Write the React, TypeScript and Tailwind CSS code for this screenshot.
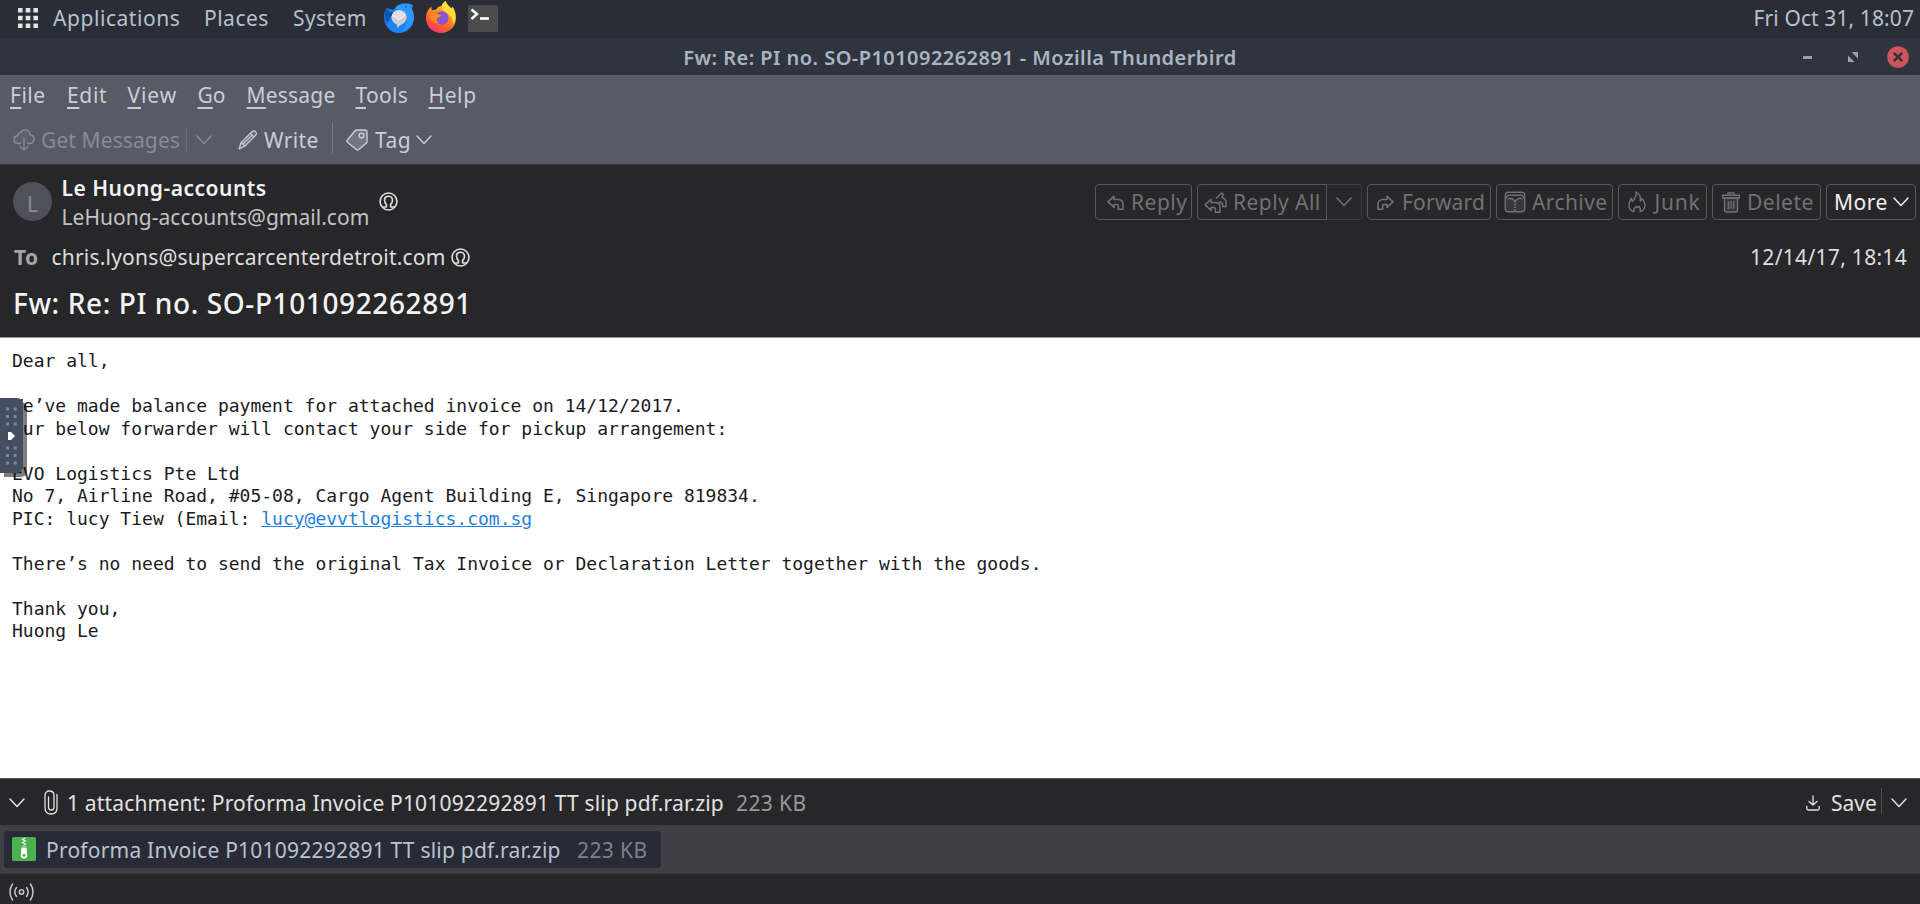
import React from "react";

type IconProps = { className?: string };

function Chevron({ className = "" }: IconProps) {
  return (
    <svg viewBox="0 0 16 10" className={`h-[10px] w-4 shrink-0 ${className}`} fill="none" stroke="currentColor" strokeWidth="1.5" strokeLinecap="round" strokeLinejoin="round">
      <path d="M1 1l7 7.5L15 1" />
    </svg>
  );
}

function GridIcon() {
  return (
    <svg viewBox="0 0 20 20" className="size-5 shrink-0 fill-[#e3e4e6]">
      {[0, 7.7, 15.4].map((y) => [0, 7.7, 15.4].map((x) => <rect key={`${x}-${y}`} x={x} y={y} width="4.6" height="4.6" rx="0.6" />))}
    </svg>
  );
}

function ThunderbirdIcon() {
  return (
    <svg viewBox="0 0 30 30" className="size-[30px] shrink-0">
      <path d="M2.500 5C.5 8 0 12 .3 15.500 .8 24 7 30 15 30c8.500 0 15-6.700 15-15 0-3.500-1-6.500-2.200-8.500L29 2.500C26-.5 18-.8 13.500 2.500L9 7z" fill="#1b83f5" />
      <path d="M2.500 5C.5 9 .3 16 3.500 20L10 9 7 9C5 8.500 3.200 7 2.500 5z" fill="#0b55ad" />
      <path d="M11 5.500C13 1 22-.3 28.500 2l-2 2C29.500 7.500 30.500 13 29 18c-1.500 5-6 9-11 10.500 4-3.500 5.500-9 4-13.500C20.500 10 16 6.500 11 5.500z" fill="#2f97ff" />
      <circle cx="15" cy="14.300" r="7.400" fill="#dededf" />
      <path d="M7.600 13l7.400 4.500 7.400-4.800c.5 3.300-.6 5.800-2.900 7.500L15.500 22.500 14 25c-1-1-1-2.300-1-3.500-3.500-1.500-5.700-4.700-5.400-8.500z" fill="#cdced0" />
      <path d="M8 11.500l7 5 7-5" fill="none" stroke="#f4f4f5" strokeWidth="1" />
      <circle cx="22" cy="3.800" r=".7" fill="#0a3f8a" />
    </svg>
  );
}

function FirefoxIcon() {
  return (
    <svg viewBox="0 0 30 32" className="h-8 w-[30px] shrink-0">
      <defs>
        <linearGradient id="fx" x1="0.800" y1="0" x2="0.300" y2="1">
          <stop offset="0" stopColor="#ffe03c" />
          <stop offset="0.450" stopColor="#ff8f1f" />
          <stop offset="0.750" stopColor="#ff5a2c" />
          <stop offset="1" stopColor="#f0308a" />
        </linearGradient>
      </defs>
      <path d="M5.500 5.500c-.2 1.500 0 2.800.6 3.700L10 8.500C11.500 6 14 5 15.500 5 16 3 17.500 1 19.500 0c.8 3 3.500 5 5.500 7.300l1.500-1.200C29 9.500 30 13 30 17c0 8.500-6.500 15-15 15S0 25.500 0 17C0 12.500 2 8 5.500 5.500z" fill="url(#fx)" />
      <path d="M15.500 6C17 3 18 1 19.500 0c.8 3 3.500 5 5.500 7.300l1.500-1.200C29.500 10 31 18 27 24c.5-6-2-9-5-11s-5-3.500-6.500-7z" fill="#ffdc3a" />
      <circle cx="15.800" cy="17" r="6.800" fill="#8a55cf" />
      <path d="M4 13c3-1.500 6-1 8.500.5l2.700.5c-.5 2-2.500 2.500-4 3-1 1-.7 3.500 1.300 4.700C7.500 23 4 19 4 13z" fill="#ff8a20" />
    </svg>
  );
}

function TerminalIcon() {
  return (
    <svg viewBox="0 0 30 28" className="h-7 w-[30px] shrink-0">
      <rect x="0" y="0" width="30" height="27" rx="1.500" fill="#4b4b4b" />
      <path d="M3.500 4.500l5.500 4.500-5.500 5" fill="none" stroke="#fff" strokeWidth="2.400" />
      <path d="M12 13.500h9" stroke="#fff" strokeWidth="2.600" />
    </svg>
  );
}

function CloudIcon() {
  return (
    <svg viewBox="0 0 22 22" className="size-[22px] shrink-0" fill="none" stroke="currentColor" strokeWidth="1.400" strokeLinecap="round" strokeLinejoin="round">
      <path d="M7.500 14.500H5C2.500 14.500 1 12.700 1 10.700S2.500 7 4.500 6.800C4.300 5 5.500 3.500 7.500 3.700 8.300 2 10 1 12 1c3 0 5 2 5 4.800 2.300.1 4 1.900 4 4.300s-1.700 4.400-4 4.400h-2.500" fill="currentColor" fillOpacity="0.150" />
      <path d="M11 9v12M7 17.500l4 3.500 4-3.500" />
    </svg>
  );
}

function PencilIcon() {
  return (
    <svg viewBox="0 0 20 20" className="size-5 shrink-0" fill="none" stroke="currentColor" strokeWidth="1.300" strokeLinejoin="round">
      <path d="M1.200 18.800L3 12.700 14 1.800c1.200-1.100 2.600-1 3.500-.2.9.9 1.200 2.400.2 3.500L7 16z" fill="currentColor" fillOpacity="0.150" />
      <path d="M3 12.700L7 16M12.500 3.500l3.500 3.600M4.800 14.300l8.700-8.700" />
    </svg>
  );
}

function TagIcon() {
  return (
    <svg viewBox="0 0 22 22" className="size-[22px] shrink-0" fill="none" stroke="currentColor" strokeWidth="1.400" strokeLinejoin="round">
      <path d="M1.300 11.300L9 1.800C9.500 1.200 10 1 10.700 1H19c1.200 0 2 .8 2 2v9.500c0 .7-.2 1.200-.8 1.700l-7.500 6.300c-.8.700-1.700.7-2.400 0l-8.800-7.200c-.7-.6-.8-1.300-.2-2z" fill="currentColor" fillOpacity="0.250" />
      <circle cx="15.500" cy="6.500" r="2.400" />
    </svg>
  );
}

function PersonIcon() {
  return (
    <svg viewBox="0 0 20 20" className="size-[19px] shrink-0" fill="none" stroke="currentColor" strokeWidth="1.700" strokeLinejoin="round">
      <circle cx="10" cy="10" r="8.900" />
      <path d="M4 15.800h3.800v-2.600C6.700 12.200 5.800 10.300 5.800 8.500 5.800 6 7.500 4.500 10 4.500s4.200 1.500 4.200 4c0 1.800-.9 3.700-2 4.700v2.600H16" />
    </svg>
  );
}

const REPLY = "M7 1.200L1 6.800l6 5.600V9.500h3.200c.8 0 1.200.4 1.200 1.200v3.500h4.600V9.700c0-3.200-2-5.200-5-5.200H7z";

function ReplyIcon({ className = "" }: IconProps) {
  return (
    <svg viewBox="0 0 17 15" className={`h-[15px] w-[17px] shrink-0 ${className}`} fill="none" stroke="currentColor" strokeWidth="1.600" strokeLinejoin="round">
      <path d={REPLY} />
    </svg>
  );
}

function ReplyAllIcon() {
  return (
    <svg viewBox="0 0 23 21" className="h-[21px] w-[23px] shrink-0" fill="none" stroke="currentColor" strokeWidth="1.500" strokeLinejoin="round">
      <path d={REPLY} transform="translate(0 6)" />
      <path d="M12 6.500L17.500 1l2 1.300-1.500 3.200c3 1 4.300 3.200 4.100 6.200l-.3 3-3-.2c.3-2.500-.5-4-2.800-4.500L15 11" />
    </svg>
  );
}

function ArchiveIcon() {
  return (
    <svg viewBox="0 0 22 22" className="size-[22px] shrink-0" fill="none" stroke="currentColor" strokeWidth="1.400" strokeLinejoin="round">
      <path d="M1.500 6.500V18c0 1.700 1 2.700 2.700 2.700h13.600c1.700 0 2.700-1 2.700-2.700V6.500l-6 .3L11 9 7.500 6.800z" fill="currentColor" fillOpacity="0.250" stroke="none" />
      <rect x="1.300" y="1.200" width="19.400" height="19.600" rx="3" />
      <path d="M1.500 7.500L4 4.200h14l2.500 3.300M4 7.500h3.500c2.500.3 1.500 2.500 3.500 2.500s1-2.200 3.500-2.500H18" />
      <path d="M11 10v10.500" strokeDasharray="1.500 1.200" strokeWidth="2" />
    </svg>
  );
}

function JunkIcon() {
  return (
    <svg viewBox="0 0 18 22" className="h-[22px] w-[18px] shrink-0" fill="none" stroke="currentColor" strokeWidth="1.400" strokeLinejoin="round">
      <path d="M6 20.800C2.800 19.800 1 17.300 1 14c0-3 1.300-5 2.200-6.700.8 1 1 2.200 1 3.200C7 8 8.500 4.500 8 1c3.500 2 4.800 5.500 4.300 9 1-.5 1.500-1.300 1.700-2.500 1.700 1.800 3 4 3 6.500 0 3.300-1.800 5.800-5 6.800.8-2.300.3-4-1-5.500-.3.8-.8 1.200-1.500 1.200-.6 0-1-.3-1.200-1-1.800 1.300-3 3-2.300 5.300z" />
    </svg>
  );
}

function TrashIcon() {
  return (
    <svg viewBox="0 0 18 21" className="h-[21px] w-[18px] shrink-0" fill="none" stroke="currentColor" strokeWidth="1.400" strokeLinejoin="round">
      <path d="M2.500 6h13v12c0 1.300-.7 2-2 2h-9c-1.300 0-2-.7-2-2z" fill="currentColor" fillOpacity="0.200" />
      <path d="M.7 3.300h16.600V6H.7zM6 3V1h6v2M6.300 9v8M9 9v8M11.700 9v8" />
    </svg>
  );
}

function ClipIcon() {
  return (
    <svg viewBox="0 0 14 25" className="h-[25px] w-[14px] shrink-0" fill="none" stroke="currentColor" strokeWidth="1.300" strokeLinecap="round">
      <path d="M13 4.500v13.500c0 4-2.300 6-6 6s-6-2-6-6V5.500C1 2.500 2.700 1 5.500 1S10 2.500 10 5.500V17c0 2-1 3-2.700 3S4.500 19 4.500 17V7" />
    </svg>
  );
}

function ZipIcon() {
  return (
    <svg viewBox="0 0 24 24" className="size-6 shrink-0">
      <rect width="24" height="24" rx="1.500" fill="#4caf50" />
      <path d="M13.500 1l-3 1.500 3 1.500-3 1.500 3 1.500-2 1.500" stroke="#e8f5e9" strokeWidth="1.200" fill="none" />
      <path d="M9.500 10.500h5l.7 8.200c.1 1.700-1 2.800-3.200 2.800s-3.300-1.100-3.200-2.800z" fill="#fff" />
      <path d="M9.500 8.800h5v1.700h-5z" fill="#aab5ab" />
      <circle cx="12" cy="18.300" r="1.400" fill="#4caf50" />
    </svg>
  );
}

function SaveIcon() {
  return (
    <svg viewBox="0 0 14 16" className="h-4 w-[14px] shrink-0" fill="none" stroke="currentColor" strokeWidth="1.300" strokeLinecap="round" strokeLinejoin="round">
      <path d="M7 1v9M3 6.500L7 10l4-3.500M.8 11.500v2c0 1 .5 1.500 1.500 1.500h9.400c1 0 1.500-.5 1.500-1.500v-2" />
    </svg>
  );
}

function SignalIcon() {
  return (
    <svg viewBox="0 0 25 18" className="h-[18px] w-[25px] shrink-0" fill="none" stroke="currentColor" strokeWidth="1.500" strokeLinecap="round">
      <circle cx="12.500" cy="9" r="2.200" />
      <path d="M7.500 4.500c-2 2.700-2 6.300 0 9M17.500 4.500c2 2.700 2 6.300 0 9M3.500 1C.2 5.800.2 12.200 3.500 17M21.500 1c3.300 4.800 3.300 11.200 0 16" />
    </svg>
  );
}

function MenuItem({ k, rest, className }: { k: string; rest: string; className: string }) {
  return (
    <span className={`shrink-0 ${className}`}>
      <span className="underline decoration-[1.5px] underline-offset-[4px]">{k}</span>
      {rest}
    </span>
  );
}

function Panel() {
  return (
    <div className="flex h-[38px] items-center bg-[#2b2d36] pr-[6px] pl-[18px] text-[#b4c2d0]">
      <div className="flex h-full items-center pb-[3px]">
        <GridIcon />
        <span className="ml-[15px] w-[151px] tracking-[0.56px]">Applications</span>
        <span className="w-[89px] tracking-[0.5px]">Places</span>
        <span className="w-[91px] tracking-[0.43px]">System</span>
      </div>
      <div className="flex pb-[3px]"><ThunderbirdIcon /></div>
      <div className="ml-3 flex pb-1"><FirefoxIcon /></div>
      <div className="ml-3 flex"><TerminalIcon /></div>
      <span className="ml-auto pb-[3px] tracking-[0.1px]">Fri Oct 31, 18:07</span>
    </div>
  );
}

function TitleBar() {
  return (
    <div className="grid h-[37px] grid-cols-[1fr_auto_1fr] items-center bg-[#30343f] text-[#aab4c2]">
      <span />
      <span className="pt-[3px] text-[20px] font-semibold tracking-[0.45px]">
        Fw: Re: PI no. SO-P101092262891 - Mozilla Thunderbird
      </span>
      <div className="flex items-center justify-end pt-px pr-[11px] text-[#9ea0ac]">
        <span className="h-[3px] w-[9px] bg-current" />
        <svg viewBox="0 0 10 10" className="mr-[29px] ml-9 size-[10px] fill-current">
          <path d="M3.500 0H10v6.500zM0 3.500L6.500 10H0z" />
        </svg>
        <svg viewBox="0 0 22 22" className="size-[22px]">
          <circle cx="11" cy="11" r="10.800" fill="#cf545c" />
          <path d="M6.800 6.800l8.400 8.400M15.200 6.800l-8.400 8.400" stroke="#30343f" strokeWidth="2.600" />
        </svg>
      </div>
    </div>
  );
}

function Toolbars() {
  return (
    <div className="flex h-[90px] flex-col border-b border-[#363c50] bg-[#585a66] text-[#c8cedb]">
      <div className="flex h-[41px] items-center pl-[10px]">
        <MenuItem k="F" rest="ile" className="w-[57px] tracking-[0.5px]" />
        <MenuItem k="E" rest="dit" className="w-[60.500px] tracking-[0.65px]" />
        <MenuItem k="V" rest="iew" className="w-[70px] tracking-[0.9px]" />
        <MenuItem k="G" rest="o" className="w-[49px]" />
        <MenuItem k="M" rest="essage" className="w-[109px] tracking-[0.2px]" />
        <MenuItem k="T" rest="ools" className="w-[73px] tracking-[0.3px]" />
        <MenuItem k="H" rest="elp" className="tracking-[0.6px]" />
      </div>
      <div className="flex h-[49px] items-center pt-px pl-[13px]">
        <div className="flex items-center text-[#888a95]">
          <CloudIcon />
          <span className="ml-[6px] w-[145px] tracking-[0.1px]">Get Messages</span>
          <span className="h-[26px] w-px bg-[#6c6e79]" />
          <Chevron className="ml-[9px]" />
        </div>
        <div className="ml-[26px]"><PencilIcon /></div>
        <span className="ml-[6px] w-[68px] tracking-[0.4px]">Write</span>
        <span className="mb-1 h-[30px] w-px bg-[#747682]" />
        <div className="ml-[13px]"><TagIcon /></div>
        <span className="ml-[7px] w-[42px] tracking-[0.5px]">Tag</span>
        <Chevron className="-ml-px" />
      </div>
    </div>
  );
}

const BOX = "flex h-9 shrink-0 items-center border border-[#58585b]";

function Actions() {
  return (
    <div className="flex gap-[5px] text-[#717174]">
      <div className={`${BOX} w-[97px] rounded pl-[11px]`}>
        <ReplyIcon />
        <span className="ml-[7px] tracking-[0.5px]">Reply</span>
      </div>
      <div className="flex">
        <div className={`${BOX} w-[130px] rounded-l pl-[6px]`}>
          <ReplyAllIcon />
          <span className="ml-[6px] tracking-[0.45px] whitespace-nowrap">Reply All</span>
        </div>
        <div className="flex h-9 w-[35px] items-center rounded-r border border-l-0 border-[#3e3e41] pl-[9px]">
          <Chevron />
        </div>
      </div>
      <div className={`${BOX} w-[124px] rounded pl-[9px]`}>
        <ReplyIcon className="-scale-x-100" />
        <span className="ml-2 tracking-[0.2px]">Forward</span>
      </div>
      <div className={`${BOX} w-[116.500px] rounded pl-[7px]`}>
        <ArchiveIcon />
        <span className="ml-[6px] tracking-[0.4px]">Archive</span>
      </div>
      <div className={`${BOX} w-[89.500px] rounded pl-[9px]`}>
        <JunkIcon />
        <span className="ml-[9px] tracking-[0.8px]">Junk</span>
      </div>
      <div className={`${BOX} w-[109px] rounded pl-[9px]`}>
        <TrashIcon />
        <span className="ml-[7px] tracking-[0.5px]">Delete</span>
      </div>
      <div className={`${BOX} w-[90px] rounded pl-[7px] text-[#f0f0f1]`}>
        <span className="w-[59px] tracking-[0.5px]">More</span>
        <Chevron />
      </div>
    </div>
  );
}

function MessageHeader() {
  return (
    <div className="flex h-[172px] flex-col bg-[#272729] pt-[9px] text-[#dededf]">
      <div className="flex h-[57px] items-start justify-between pr-[4px] pl-[13px]">
        <div className="flex items-center">
          <div className="mb-[2px] flex size-[39px] items-center justify-center rounded-full bg-[#50505a] pt-1 text-[#8b8b95]">L</div>
          <div className="ml-[9.500px] flex w-[317.500px] flex-col leading-[28.500px]">
            <span className="font-semibold tracking-[0.5px] text-[#f1f1f2]">Le Huong-accounts</span>
            <span className="tracking-[0.03px] text-[#c2c2c4]">LeHuong-accounts@gmail.com</span>
          </div>
          <div className="mb-[3px]"><PersonIcon /></div>
        </div>
        <div className="pt-[10px]"><Actions /></div>
      </div>
      <div className="mt-3 flex h-7 items-center pl-[14px]">
        <span className="w-[37.500px] font-bold tracking-[0.3px] text-[#a5a5a9]">To</span>
        <span className="w-[399.500px] tracking-[0.2px]">chris.lyons@supercarcenterdetroit.com</span>
        <PersonIcon />
        <span className="mr-[13px] ml-auto tracking-[0.3px]">12/14/17, 18:14</span>
      </div>
      <h1 className="mt-[12px] pl-[13px] text-[28px] leading-10 font-medium tracking-[0.6px] text-[#f4f4f5]">Fw: Re: PI no. SO-P101092262891</h1>
    </div>
  );
}

function DrawerHandle() {
  return (
    <div className="absolute top-[60px] left-0 flex h-[75px] w-[23px] items-center rounded-r-md bg-[#434e63] shadow-[4px_4px_0_rgba(0,0,0,0.5)]">
      <svg viewBox="0 0 23 74" className="h-[74px] w-[23px]">
        {[10, 17.5, 25, 49, 56.5, 64].map((y) => (
          <g key={y} fill="#7d8594">
            <rect x="6" y={y - 1.5} width="3" height="3" />
            <rect x="13.700" y={y - 1.5} width="3" height="3" />
          </g>
        ))}
        <path d="M8 33h3l4 4-4 4H8z" fill="#fff" />
      </svg>
    </div>
  );
}

const BEFORE_LINK = [
  "Dear all,",
  "",
  "We’ve made balance payment for attached invoice on 14/12/2017.",
  "Our below forwarder will contact your side for pickup arrangement:",
  "",
  "EVO Logistics Pte Ltd",
  "No 7, Airline Road, #05-08, Cargo Agent Building E, Singapore 819834.",
];

const AFTER_LINK = [
  "",
  "There’s no need to send the original Tax Invoice or Declaration Letter together with the goods.",
  "",
  "Thank you,",
  "Huong Le",
];

function Line({ children }: { children?: React.ReactNode }) {
  return <div className="h-[22.500px] whitespace-pre">{children}</div>;
}

function Body() {
  return (
    <div className="relative h-[441px] border-t border-[#98989c] bg-white pt-[12px] pl-[12px] text-[#1b1b1e]">
      <div className="font-['DejaVu_Sans_Mono',monospace] text-[18px] leading-[22.500px]">
        {BEFORE_LINK.map((l, i) => <Line key={i}>{l}</Line>)}
        <Line>
          <span>PIC: lucy Tiew (Email: </span>
          <a className="text-[#1f7fe0] underline">lucy@evvtlogistics.com.sg</a>
        </Line>
        {AFTER_LINK.map((l, i) => <Line key={i}>{l}</Line>)}
      </div>
      <DrawerHandle />
    </div>
  );
}

function Attachments() {
  return (
    <>
      <div className="flex h-[47px] items-center border-t border-[#55555c] bg-[#272729] pt-px pl-[9px] text-[#e2e2e3]">
        <Chevron />
        <div className="ml-[19px] flex"><ClipIcon /></div>
        <span className="ml-[9px] w-[669px] pt-[1px] tracking-[0.17px]">1 attachment: Proforma Invoice P101092292891 TT slip pdf.rar.zip</span>
        <span className="pt-[1px] tracking-[0.4px] text-[#98989b]">223 KB</span>
        <div className="ml-auto flex items-center">
          <SaveIcon />
          <span className="ml-[11px] w-[50px] pt-[1px]">Save</span>
          <span className="mb-1 h-[26px] w-px bg-[#505054]" />
          <Chevron className="mr-[13px] ml-[9px]" />
        </div>
      </div>
      <div className="flex h-[49px] items-center border-b border-[#38383d] bg-[#3f3f45] pl-1">
        <div className="flex h-[37px] w-[657px] items-center rounded bg-[#282b35] pl-2 text-[#b9c2d3]">
          <ZipIcon />
          <span className="ml-[10px] w-[531px] pt-px tracking-[0.22px]">Proforma Invoice P101092292891 TT slip pdf.rar.zip</span>
          <span className="pt-px tracking-[0.4px] text-[#7c808b]">223 KB</span>
        </div>
      </div>
      <div className="flex h-[30px] items-center bg-[#272729] pt-[6px] pl-[9px] text-[#c6c6ca]">
        <SignalIcon />
      </div>
    </>
  );
}

export default function App() {
  return (
    <div className="flex h-[904px] w-[1920px] flex-col overflow-hidden bg-[#272729] font-['Noto_Sans',sans-serif] text-[21px] leading-7 whitespace-nowrap">
      <Panel />
      <TitleBar />
      <Toolbars />
      <MessageHeader />
      <Body />
      <Attachments />
    </div>
  );
}
